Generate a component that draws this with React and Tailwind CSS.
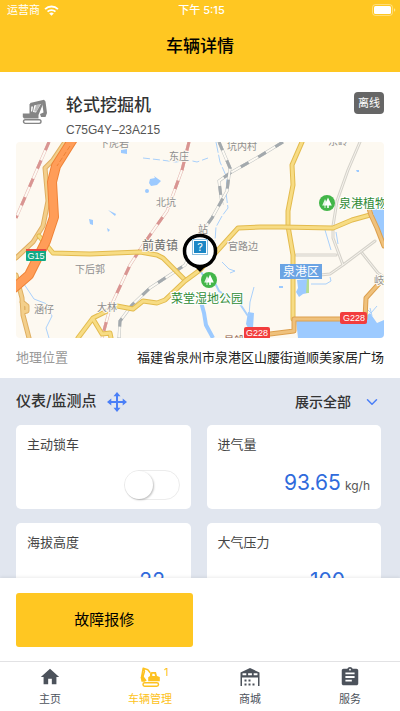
import { useState } from 'react';
import { MdHome, MdAssignment } from 'react-icons/md';
import { ChevronDown } from 'lucide-react';

const GAUGES = [
    { id: 'lock', name: '主动锁车', type: 'switch' },
    { id: 'intake', name: '进气量', value: '93.65', unit: 'kg/h' },
    { id: 'altitude', name: '海拔高度', value: '22', unit: 'm' },
    { id: 'pressure', name: '大气压力', value: '100', unit: 'kPa' },
];

const ExcavatorIcon = ({ className }) => (
    <svg viewBox="0 0 26 26" className={className} fill="currentColor" aria-hidden="true">
        <path d="M8 4 22 .8l1.500 1.700L25 14l-1.500 4H19l-1-3 3.500-1.500-1.200-8.800L9 7z" />
        <path fillRule="evenodd" d="M7.500 5h5L11 13l3 .5L19.500 4l1.500 1-4.500 11v3.500H2L.8 18v-3.500h6.700zM9.300 7.500l-.3 5h1.200l.8-5z" />
        <path d="m14 6 4.500-1-4 7.500H12z" opacity=".55" />
        <rect x="1.500" y="20.800" width="17.500" height="3.600" rx="1.800" fill="none" stroke="currentColor" strokeWidth="1.400" />
    </svg>
);

const DiggerIcon = ({ className }) => (
    <svg viewBox="0 0 20 20" className={className} fill="none" stroke="currentColor" aria-hidden="true">
        <path d="M10 5.500 7.800 2.700 3.200 1.200 1.500 10.500M3.200 1.200l1.300 3L3 9.500" strokeWidth="1.500" strokeLinejoin="round" strokeLinecap="round" />
        <path d="M.6 10.300 3.300 9l3.400 4.500-2 1.200H1.500z" fill="currentColor" stroke="none" />
        <path fill="currentColor" stroke="none" fillRule="evenodd" d="M8.200 10.300 10 9V6.500L11.500 5H16l1 4 2.800 1v4.200H8.200zM12.300 6.800v2.300H15l-.5-2.300z" />
        <rect x="3" y="15.700" width="15.500" height="3.500" rx="1.700" strokeWidth="1.500" />
    </svg>
);

const StoreIcon = ({ className }) => (
    <svg viewBox="0 0 20 20" className={className} fill="currentColor" aria-hidden="true">
        <path fillRule="evenodd" d="M.5 19V5.500L10 1l9.500 4.500V19H18v-8.500H2V19zM2.500 6.300v2h3.800v-2zM8.100 6.300v2h3.800v-2zM13.700 6.300v2h3.800v-2z" />
        <path d="M4.500 12.500h2v2h-2zM8.500 12.500h2v2h-2zM4.500 16.500h2v2h-2zM8.500 16.500h2v2h-2zM12.500 16.500h2v2h-2z" />
    </svg>
);

const MoveIcon = ({ className }) => (
    <svg viewBox="0 0 20 20" className={className} aria-hidden="true">
        <path d="M10 2v16M2 10h16" stroke="currentColor" strokeWidth="2" />
        <path d="M10 0l3.500 4.300h-7zM10 20l3.500-4.300h-7zM0 10l4.300-3.500v7zM20 10l-4.300-3.500v7z" fill="currentColor" />
    </svg>
);

const Road = ({ d, width = 4, fill = '#f7dc84', edge = '#e3bb4e' }) => (
    <g fill="none" strokeLinejoin="round" strokeLinecap="round">
        <path d={d} stroke={edge} strokeWidth={width + 1} />
        <path d={d} stroke={fill} strokeWidth={width - 1} />
    </g>
);

const Rail = ({ d, color }) => (
    <g fill="none">
        <path d={d} stroke={color} strokeWidth="3" opacity=".7" />
        <path d={d} stroke="#fdfaf3" strokeWidth="2" />
        <path d={d} stroke={color} strokeWidth="3" strokeDasharray="9 11" />
    </g>
);

const TreeBadge = ({ x, y }) => (
    <g transform={`translate(${x} ${y})`}>
        <circle r="8" fill="#43b649" />
        <path d="M1-5.500 4.800 2.500H1.800V5H.2V2.500H-2.500z" fill="#fff" />
        <path d="M-2-4-4.800 2.500h2.300V5h1V2.500L-.5-1z" fill="#fff" opacity=".85" />
    </g>
);

const LocationMap = () => (
    <svg viewBox="0 0 368 196" preserveAspectRatio="xMidYMid slice" className="block h-[196px] w-full rounded-sm" role="img" aria-label="车辆位置地图">
        <rect width="368" height="196" fill="#fdf9f1" />

        {/* water */}
        <g fill="#9ccaff">
            <path d="M280 178l70-4 4-3 7 10 7-3v18h-86z" />
            <path d="M356 68l12-4v38l-7-16z" />
            <path d="M281 138l12-1-1 14-5 1-4 3-3-5 2-4z" />
            <path d="M134 37l5-1-1-2 7 5-4 4-6 1-2-3z" />
            <circle cx="131" cy="49" r="2" />
            <path d="M105 8l6-1v5l-6-1zM73 77l4 1v5l-3-1zM92 68l8 4-1 2zM91 86l3 2-2 2zM232 170l6 1-1 15h-5l-2-4zM340 28h3v2h-2zM263 144h4v2h-4z" />
        </g>
        <path d="M291 137h2v14h-3z" fill="#b5dc92" />
        <g fill="none" stroke="#a9d0fb" strokeWidth="1">
            <path d="M127 16l18 2 15 2 12-2 9 2 11-4" strokeDasharray="7 3" />
            <path d="M200 0l4 20 7 16-1 15 2 15-6 8-6 11-1 14" strokeDasharray="11 2" />
            <path d="M0 131l10 14 8 12 13 5 5 12-6 12 3 10" />
            <path d="M183 126l6 11 8 0 6 12 12 8 9 5 8 12" strokeWidth="2" />
            <path d="M206 120l7 7 6 2-5 2M238 145l-4 15-1 14M295 142h15l5-3-1-4M309 88l6 20M320 90l2 12M350 166l5 5 6-7M354 166l2 8" />
            <path d="M185 160l3 11 2 12 7 13" strokeWidth="4" stroke="#9ccaff" />
        </g>

        {/* minor roads */}
        <Road d="M344 0l-12 28-11 31-4 25v12l10 27 32-24M327 123l-13 9-10 1M280 113h40M346 111l16 20 6 4" width={2} fill="#f6f3ed" edge="#d5d2ca" />

        <Rail d="M33 0L0 76" color="#d99592" />
        <Rail d="M173 0l-7 28-15 41-24 34-13 20-20 43-8 30" color="#d99592" />
        <Rail d="M267 0l-23 14-30 17-11 8 3 24" color="#a3a9ad" />
        <Rail d="M203 0l11 26-3 23-15 27-12 17-15 30-35 23-18 17-12 16-1 17" color="#a3a9ad" />

        {/* trunk roads */}
        <Road d="M0 116l17-16 10-16 5-25-3-33 8-8L49 0" fill="#f3cf8b" edge="#dfaf62" />
        <Road d="M0 133l6 23 1 17 6 23M6 160l5 4v5l-4 1" fill="#f3cf8b" edge="#dfaf62" />
        <Road d="M23 94l14 17 37 1 50-2 17 3 6 3 22 22" />
        <Road d="M286 0l-10 23 1 20-5 26v15l5 29v64" />
        <Road d="M62 196l15-20 24-12 16 3 10-8 14 2 8-3 20-19 15-11 38-42 22-1h22l51 1 19-8 18-5M77 177l9 15 8-1 1 5" />
        <Road d="M352 63l3 10 6 13 7 18M254 192l24-3v-12h71l1-21 18-20" fill="#efc17c" edge="#dda04f" />
        <Road d="M57-3L40 24l-4 16 2 35-8 24-17 34-15 13" width={9} fill="#ff9d58" edge="#ef8337" />
        <path d="M54 4L41 24" stroke="#ef8337" strokeDasharray="5 2" fill="none" />

        {/* route shields */}
        <g fontFamily="Liberation Sans, sans-serif" fontSize="9" fill="#fff" textAnchor="middle">
            <rect x="10" y="107" width="20" height="12" rx="1" fill="#11a984" />
            <rect x="10" y="107" width="20" height="2" fill="#e64a42" />
            <text x="20" y="117">G15</text>
            <rect x="228" y="185" width="26" height="12" rx="2" fill="#f23d3d" />
            <text x="241" y="194">G228</text>
            <rect x="324" y="170" width="27" height="12" rx="2" fill="#f23d3d" />
            <text x="338" y="179">G228</text>
        </g>

        <g fontSize="10" fill="#8f8f8f" stroke="#fdf9f1" strokeWidth="2" paintOrder="stroke" textAnchor="middle">
            <text x="98" y="5">下虎岩</text>
            <text x="163" y="18">东庄</text>
            <text x="226" y="8">坑内村</text>
            <text x="150" y="64">北坑</text>
            <text x="227" y="108">官路边</text>
            <text x="74" y="131">下后郭</text>
            <text x="28" y="171">涵仔</text>
            <text x="91" y="169">大林</text>
            <text x="322" y="3">东岭</text>
            <text x="363" y="142">岐</text>
            <text x="187" y="91">站</text>
            <text x="218" y="202" fill="#8b5a4a">星船</text>
            <text x="144" y="108" fontSize="12" fill="#6e6e6e">前黄镇</text>
        </g>
        <g fontSize="12" fill="#2f8b35" stroke="#fff" strokeWidth="2" paintOrder="stroke">
            <text x="155" y="161">菜堂湿地公园</text>
            <text x="323" y="66">泉港植物</text>
        </g>
        <rect x="264" y="122" width="42" height="15" fill="#6ba4e4" />
        <text x="285" y="134" fontSize="12" fill="#fff" textAnchor="middle">泉港区</text>
        <TreeBadge x={311} y={61} />
        <TreeBadge x={193} y={138} />

        {/* vehicle pin */}
        <path d="M177 123l7 7 7-7z" />
        <circle cx="184" cy="109" r="15.500" fill="#fff" stroke="#000" strokeWidth="3.500" />
        <rect x="176.500" y="97.500" width="15" height="15" fill="#fff" stroke="#8dbfdf" />
        <rect x="178" y="99" width="12" height="12" fill="#1c87c6" />
        <text x="184" y="109" fontSize="11" fill="#fff" textAnchor="middle">?</text>
    </svg>
);

const StatusBar = () => (
    <div className="grid h-5 grid-cols-3 items-center pr-1 pl-[7px] text-[11px] text-white">
        <div className="flex items-center gap-1">
            <span>运营商</span>
            <svg viewBox="0 0 16 12" className="h-[11px] w-[15px]" fill="none" stroke="currentColor" strokeWidth="2" aria-hidden="true">
                <path d="M1 4.500a10 10 0 0 1 14 0M3.700 7.300a6.200 6.200 0 0 1 8.600 0" />
                <path d="M8 11.800 5.500 9.300a3.600 3.600 0 0 1 5 0z" fill="currentColor" stroke="none" />
            </svg>
        </div>
        <span className="text-center font-medium">下午 5:15</span>
        <svg viewBox="0 0 24 12" className="h-3 w-6 justify-self-end" aria-hidden="true">
            <rect x=".5" y=".5" width="20" height="11" rx="3" fill="none" stroke="#fff" opacity=".4" />
            <rect x="2" y="2" width="17" height="8" rx="1.500" fill="#fff" />
            <path d="M22 4v4l1.500-2z" fill="#fff" opacity=".5" />
        </svg>
    </div>
);

const GaugeCard = ({ gauge, checked, onToggle }) => (
    <div className="flex h-[84px] flex-col justify-between rounded-[5px] bg-white px-[11px] py-[9px]">
        {gauge.type === 'switch' ? (
            <>
                <label htmlFor={gauge.id} className="text-[13px] leading-5 text-[#444]">{gauge.name}</label>
                <input
                    id={gauge.id}
                    type="checkbox"
                    checked={checked}
                    onChange={onToggle}
                    className="h-[30px] w-14 appearance-none self-end rounded-full border border-[#ececec] bg-white before:block before:size-7 before:rounded-full before:bg-white before:shadow-[1px_1px_2px_rgba(0,0,0,0.25)] checked:bg-[#ffc722] checked:before:ml-[26px]"
                />
            </>
        ) : (
            <>
                <div className="text-[13px] leading-5 text-[#444]">{gauge.name}</div>
                <div className="flex items-baseline justify-end gap-1 leading-[34px]">
                    <span className="text-[21px] text-[#2f6bdc]">{gauge.value}</span>
                    <span className="text-xs text-[#555]">{gauge.unit}</span>
                </div>
            </>
        )}
    </div>
);

const TABS = [
    { name: '主页', icon: MdHome, href: '#home', size: 'size-[22px]' },
    { name: '车辆管理', icon: DiggerIcon, href: '#vehicles', badge: 1, size: 'size-5' },
    { name: '商城', icon: StoreIcon, href: '#store', size: 'size-5' },
    { name: '服务', icon: MdAssignment, href: '#service', size: 'size-[22px]' },
];

const App = () => {
    const [locked, setLocked] = useState(false);

    return (
        <div className="flex h-screen flex-col bg-white font-['Inter','Noto_Sans_CJK_SC',sans-serif] text-[#333]">
            <header className="shrink-0 bg-[#ffc722]">
                <StatusBar />
                <h1 className="text-center text-[17px] leading-[52px] font-medium text-black">车辆详情</h1>
            </header>

            <main className="min-h-0 flex-1 overflow-hidden">
                <section className="px-4 pt-5">
                    <div className="flex h-[50px] items-start">
                        <ExcavatorIcon className="mt-[7px] ml-[6px] size-[26px] text-[#858585]" />
                        <div className="ml-[18px] flex-1">
                            <h2 className="text-[17px] leading-[26px] font-medium text-[#333]">轮式挖掘机</h2>
                            <p className="font-['Liberation_Sans',sans-serif] text-xs leading-6 text-[#555]">C75G4Y–23A215</p>
                        </div>
                        <span className="rounded-sm bg-[#666] px-[4px] text-[11px] leading-[22px] text-white">离线</span>
                    </div>
                    <LocationMap />
                    <div className="flex h-10 items-center justify-between text-[13px]">
                        <span className="text-[#999]">地理位置</span>
                        <span className="text-[#222]">福建省泉州市泉港区山腰街道顺美家居广场</span>
                    </div>
                </section>

                <section className="bg-[#e1e6ef] pr-[19px] pb-4 pl-4">
                    <div className="flex h-[47px] items-center">
                        <h3 className="text-[15px] font-medium">仪表/监测点</h3>
                        <button type="button" aria-label="移动" className="ml-[10px] text-[#4a7ff7]">
                            <MoveIcon className="size-5" />
                        </button>
                        <button type="button" className="ml-auto flex items-center gap-3 text-[14px] font-medium">
                            展示全部
                            <ChevronDown className="size-[18px] text-[#4a7ff7]" />
                        </button>
                    </div>
                    <div className="grid grid-cols-2 gap-x-4 gap-y-[14px]">
                        {GAUGES.map(gauge => (
                            <GaugeCard key={gauge.id} gauge={gauge} checked={locked} onToggle={() => setLocked(!locked)} />
                        ))}
                    </div>
                </section>
            </main>

            <div className="relative shrink-0 bg-white px-4 pt-[15px] pb-[14px] shadow-[0_-1px_3px_rgba(0,0,0,0.08)]">
                <button type="button" className="h-[54px] w-[48%] rounded-[3px] bg-[#ffc722] text-[15px] text-black">故障报修</button>
            </div>

            <nav className="relative grid h-[50px] shrink-0 grid-cols-4 border-t border-[#e2e2e4] bg-white">
                {TABS.map(tab => (
                    <a key={tab.name} href={tab.href} className={`flex flex-col items-center pt-1 text-[11px] ${tab.badge ? 'text-[#fdc221]' : 'text-[#4c525b]'}`}>
                        <span className="relative flex h-[22px] items-center">
                            <tab.icon className={tab.size} />
                            {tab.badge && <span className="absolute -top-1 left-full ml-1 leading-5">{tab.badge}</span>}
                        </span>
                        <span className="leading-[22px]">{tab.name}</span>
                    </a>
                ))}
            </nav>
        </div>
    );
};

export default App;
